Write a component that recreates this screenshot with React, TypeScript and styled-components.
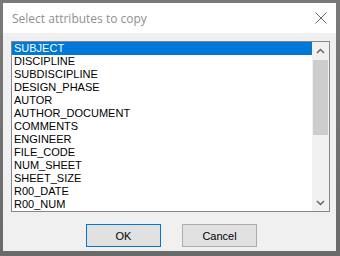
import React from "react";
import styled, { createGlobalStyle } from "styled-components";

const GlobalStyle = createGlobalStyle`
  html, body {
    margin: 0;
    padding: 0;
    background: #6f6f6f;
  }
`;

const attributes = [
  "SUBJECT",
  "DISCIPLINE",
  "SUBDISCIPLINE",
  "DESIGN_PHASE",
  "AUTOR",
  "AUTHOR_DOCUMENT",
  "COMMENTS",
  "ENGINEER",
  "FILE_CODE",
  "NUM_SHEET",
  "SHEET_SIZE",
  "R00_DATE",
  "R00_NUM",
];

const Frame = styled.div`
  width: 340px;
  height: 256px;
  box-sizing: border-box;
  padding: 3px 4px 5px 3px;
  background: linear-gradient(#7a7a7a, #6a6a6a);
`;

const Window = styled.div`
  height: 100%;
  display: flex;
  flex-direction: column;
  background: #f0f0f0;
`;

const TitleBar = styled.div`
  height: 30px;
  flex: none;
  display: flex;
  align-items: center;
  justify-content: space-between;
  padding: 0 8px 0 9px;
  background: #ffffff;
  font-family: "Open Sans", "Liberation Sans", sans-serif;
  font-size: 12px;
  color: #8f8f8f;
`;

const CloseButton = styled.div`
  width: 14px;
  height: 14px;
  display: flex;
  align-items: center;
  justify-content: center;
`;

const Body = styled.div`
  flex: 1;
  display: flex;
  flex-direction: column;
  padding: 8px 6px 0 8px;
`;

const ListBox = styled.div`
  height: 171px;
  box-sizing: border-box;
  border: 1px solid #828790;
  background: #ffffff;
  display: flex;
`;

const Items = styled.div`
  flex: 1;
  display: flex;
  flex-direction: column;
  overflow: hidden;
`;

const Item = styled.div<{ $selected?: boolean }>`
  height: 13px;
  line-height: 13px;
  padding-left: 2px;
  font-family: "Liberation Sans", Arial, sans-serif;
  font-size: 11px;
  white-space: nowrap;
  color: ${(p) => (p.$selected ? "#ffffff" : "#000000")};
  background: ${(p) => (p.$selected ? "#0078d7" : "transparent")};
`;

const ScrollBar = styled.div`
  width: 17px;
  flex: none;
  display: flex;
  flex-direction: column;
  background: #f0f0f0;
`;

const ArrowButton = styled.div`
  height: 17px;
  flex: none;
  display: flex;
  align-items: center;
  justify-content: center;
`;

const Track = styled.div`
  flex: 1;
  display: flex;
  flex-direction: column;
  padding: 1px 1px 0 1px;
`;

const Thumb = styled.div`
  height: 75px;
  background: #cdcdcd;
`;

const Footer = styled.div`
  display: flex;
  justify-content: center;
  gap: 21px;
  padding: 12px 0 0 2px;
`;

const DialogButton = styled.button<{ $default?: boolean }>`
  width: 75px;
  height: 23px;
  box-sizing: border-box;
  border: 1px solid ${(p) => (p.$default ? "#0078d7" : "#adadad")};
  background: #e1e1e1;
  font-family: "Liberation Sans", Arial, sans-serif;
  font-size: 11px;
  color: #000000;
  padding: 0;
`;

const Chevron = ({ up }: { up?: boolean }) => (
  <svg width="9" height="6" viewBox="0 0 9 6">
    <path
      d={up ? "M1 5 L4.5 1.5 L8 5" : "M1 1 L4.5 4.5 L8 1"}
      fill="none"
      stroke="#606060"
      strokeWidth="1.4"
    />
  </svg>
);

export default function App() {
  return (
    <>
      <GlobalStyle />
      <Frame>
        <Window>
          <TitleBar>
            <span>Select attributes to copy</span>
            <CloseButton>
              <svg width="12" height="12" viewBox="0 0 12 12">
                <path d="M0.5 0.5 L11.5 11.5 M11.5 0.5 L0.5 11.5" stroke="#6a6a6a" strokeWidth="1" />
              </svg>
            </CloseButton>
          </TitleBar>
          <Body>
            <ListBox>
              <Items>
                {attributes.map((name, i) => (
                  <Item key={name} $selected={i === 0}>
                    {name}
                  </Item>
                ))}
              </Items>
              <ScrollBar>
                <ArrowButton>
                  <Chevron up />
                </ArrowButton>
                <Track>
                  <Thumb />
                </Track>
                <ArrowButton>
                  <Chevron />
                </ArrowButton>
              </ScrollBar>
            </ListBox>
            <Footer>
              <DialogButton $default>OK</DialogButton>
              <DialogButton>Cancel</DialogButton>
            </Footer>
          </Body>
        </Window>
      </Frame>
    </>
  );
}
